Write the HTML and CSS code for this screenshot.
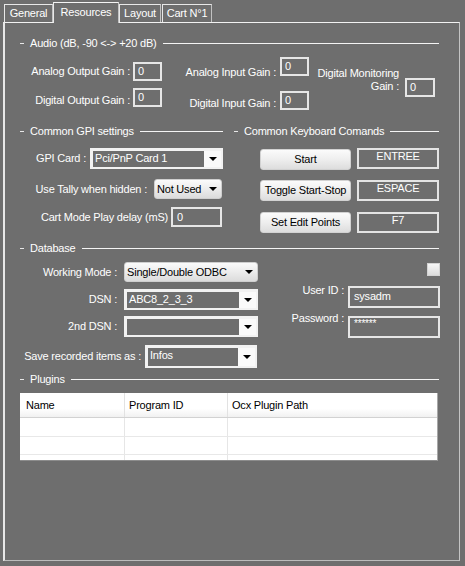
FILE: index.html
```html
<!DOCTYPE html>
<html>
<head>
<meta charset="utf-8">
<title>Resources</title>
<link rel="stylesheet" href="styles.css">
</head>
<body>
<div class="tabs">
  <div class="tab t-general">General</div>
  <div class="tab t-res">Resources</div>
  <div class="tab t-layout">Layout</div>
  <div class="tab t-cart">Cart N°1</div>
</div>
<div class="panel">
  <div class="gh gh-wide"><span>Audio (dB, -90 &lt;-&gt; +20 dB)</span></div>
  <div class="audio">
    <div class="acol1">
      <div class="arow"><span class="lbl al1 a1r1">Analog Output Gain :</span><span class="ibox ag">0</span></div>
      <div class="arow a1row2"><span class="lbl al1 a1r2">Digital Output Gain :</span><span class="ibox ag">0</span></div>
    </div>
    <div class="acol2">
      <div class="arow"><span class="lbl al2 a2r1">Analog Input Gain :</span><span class="ibox ag">0</span></div>
      <div class="arow a2row2"><span class="lbl al2 a2r2">Digital Input Gain :</span><span class="ibox ag">0</span></div>
    </div>
    <div class="acol3">
      <span class="lbl al3">Digital Monitoring<br>Gain :</span><span class="ibox ag3">0</span>
    </div>
  </div>
  <div class="mid">
    <div class="gcol">
      <div class="gh gh-gpi"><span>Common GPI settings</span></div>
      <div class="frow r-gpi"><span class="lbl">GPI Card :</span><div class="combo w-gpi"><span class="ct">Pci/PnP Card 1</span><span class="cb"><i class="arr"></i></span></div></div>
      <div class="frow r-tally"><span class="lbl">Use Tally when hidden :</span><div class="dd w-tally"><span>Not Used</span><i class="arr"></i></div></div>
      <div class="frow r-cart"><span class="lbl">Cart Mode Play delay (mS)</span><span class="ibox w-cart">0</span></div>
    </div>
    <div class="kcol">
      <div class="gh gh-kb"><span>Common Keyboard Comands</span></div>
      <div class="krow k1"><span class="btn">Start</span><span class="kbox">ENTREE</span></div>
      <div class="krow k2"><span class="btn">Toggle Start-Stop</span><span class="kbox">ESPACE</span></div>
      <div class="krow k3"><span class="btn">Set Edit Points</span><span class="kbox">F7</span></div>
    </div>
  </div>
  <div class="gh gh-wide"><span>Database</span></div>
  <div class="db">
    <div class="dleft">
      <div class="frow d-wm"><span class="lbl">Working Mode :</span><div class="dd w-db"><span>Single/Double ODBC</span><i class="arr"></i></div></div>
      <div class="frow d-dsn"><span class="lbl">DSN :</span><div class="combo w-db"><span class="ct">ABC8_2_3_3</span><span class="cb"><i class="arr"></i></span></div></div>
      <div class="frow d-dsn2"><span class="lbl">2nd DSN :</span><div class="combo w-db"><span class="ct"></span><span class="cb"><i class="arr"></i></span></div></div>
    </div>
    <div class="dright">
      <div class="chk"></div>
      <div class="frow d-user"><span class="lbl">User ID :</span><span class="ibox w-user">sysadm</span></div>
      <div class="frow d-pass"><span class="lbl">Password :</span><span class="ibox w-user pw">******</span></div>
    </div>
  </div>
  <div class="srow"><span class="lbl l-save">Save recorded items as :</span><div class="combo w-save"><span class="ct">Infos</span><span class="cb"><i class="arr"></i></span></div></div>
  <div class="gh gh-wide gh-plug"><span>Plugins</span></div>
  <div class="tbl">
    <div class="trow thead"><span class="c1">Name</span><span class="c2">Program ID</span><span class="c3">Ocx Plugin Path</span></div>
    <div class="trow tr1"><span class="c1"></span><span class="c2"></span><span class="c3"></span></div>
    <div class="trow tr2"><span class="c1"></span><span class="c2"></span><span class="c3"></span></div>
    <div class="trow tr3"><span class="c1"></span><span class="c2"></span><span class="c3"></span></div>
  </div>
</div>
</body>
</html>
```

FILE: styles.css
```css
html, body {
  margin: 0;
  padding: 0;
}
body {
  width: 465px;
  height: 566px;
  overflow: hidden;
  background: #6e6e6e;
  color: #fff;
  font-family: "Liberation Sans", Arial, sans-serif;
  font-size: 11px;
  letter-spacing: -0.2px;
}

/* Tabs */
.tabs {
  display: flex;
  align-items: flex-end;
  height: 22px;
  padding-left: 4px;
}
.tab {
  box-sizing: border-box;
  height: 18px;
  border: 1px solid #e8e8e8;
  border-right-color: #c2c2c2;
  border-bottom: none;
  text-align: center;
  line-height: 17px;
  white-space: nowrap;
}
.t-general { width: 49px; }
.t-res {
  width: 66px;
  height: 21px;
  margin-bottom: -1px;
  line-height: 19px;
  position: relative;
  z-index: 1;
  background: #6e6e6e;
  border-top-color: #f4f4f4;
}
.t-layout { width: 42px; }
.t-cart { width: 50px; margin-left: 1px; }

/* Panel */
.panel {
  box-sizing: border-box;
  margin-left: 3px;
  width: 457px;
  height: 539px;
  border-top: 1px solid #f2f2f2;
  border-left: 2px solid #e8e8e8;
  border-right: 1px solid #c4c4c4;
  border-bottom: 1px solid #bcbcbc;
  padding: 14px 0 0 15px;
}

/* Group headers */
.gh {
  display: flex;
  align-items: center;
  height: 13px;
  line-height: 13px;
  white-space: nowrap;
}
.gh::before {
  content: "";
  width: 4px;
  height: 1px;
  background: #e8e8e8;
  margin-right: 6px;
}
.gh::after {
  content: "";
  flex: 1;
  height: 1px;
  background: #f4f4f4;
  margin-left: 6px;
}
.gh-wide { width: 419px; }
.gh-gpi { width: 203px; }
.gh-kb { width: 205px; }

.lbl {
  line-height: 13px;
  white-space: nowrap;
}

/* Text boxes */
.ibox {
  box-sizing: border-box;
  border: 2px solid #e6e6e6;
  color: #fff;
  padding-left: 3px;
  white-space: nowrap;
}

/* Audio */
.audio {
  display: flex;
  align-items: flex-start;
  height: 75px;
}
.arow {
  display: flex;
  align-items: flex-start;
}
.acol1 { padding-top: 12px; }
.a1row2 { margin-top: 7px; }
.al1 { width: 110px; margin-right: 3px; text-align: right; }
.a1r1 { margin-top: 3px; }
.a1r2 { margin-top: 6px; }
.ag {
  width: 29px;
  height: 19px;
  line-height: 15px;
}
.acol2 { padding-top: 7px; }
.a2row2 { margin-top: 12px; }
.al2 { width: 114px; margin-right: 4px; text-align: right; }
.a2r1 { margin-top: 9px; }
.a2r2 { margin-top: 6px; }
.acol3 {
  display: flex;
  align-items: flex-start;
}
.al3 {
  width: 90px;
  text-align: right;
  margin-top: 17px;
}
.ag3 {
  width: 30px;
  height: 19px;
  line-height: 15px;
  margin-left: 6px;
  margin-top: 28px;
}

/* Generic form rows */
.frow {
  display: flex;
  justify-content: flex-end;
  align-items: center;
}

/* Combo (editable) */
.combo {
  box-sizing: border-box;
  display: flex;
  background: #f2f2f2;
  padding: 3px 2px 2px 3px;
}
.combo .ct {
  flex: 1;
  background: #6e6e6e;
  color: #fff;
  padding-left: 2px;
  line-height: 14px;
  white-space: nowrap;
  overflow: hidden;
}
.combo .cb {
  width: 17px;
  display: flex;
  align-items: center;
  justify-content: center;
  background: #fafafa;
}
.arr {
  display: block;
  width: 0;
  height: 0;
  border-left: 4px solid transparent;
  border-right: 4px solid transparent;
  border-top: 4px solid #000;
}

/* Dropdown list (button look) */
.dd {
  box-sizing: border-box;
  display: flex;
  align-items: center;
  background: linear-gradient(#fbfbfb, #ececec 50%, #dcdcdc);
  border: 1px solid #cfcfcf;
  border-radius: 3px;
  color: #000;
  padding-left: 2px;
  white-space: nowrap;
}
.dd .arr {
  margin-left: auto;
  margin-right: 4px;
}

/* GPI column */
.mid {
  display: flex;
  height: 117px;
}
.gcol { width: 203px; }
.r-gpi { margin-top: 10px; height: 21px; }
.r-gpi .lbl { margin-right: 4px; }
.w-gpi { width: 133px; height: 21px; }
.r-tally { margin-top: 10px; height: 20px; }
.r-tally .lbl { margin-right: 7px; }
.w-tally { width: 68px; height: 20px; margin-right: 1px; }
.r-cart { margin-top: 8px; height: 20px; }
.r-cart .lbl { margin-right: 3px; }
.w-cart {
  width: 51px;
  height: 20px;
  line-height: 16px;
  margin-right: 1px;
  padding-left: 4px;
}

/* Keyboard column */
.kcol {
  width: 205px;
  margin-left: 11px;
}
.krow {
  display: flex;
  align-items: flex-start;
  padding-left: 26px;
  gap: 6px;
}
.k1 { margin-top: 10px; }
.k1 .btn { margin-top: 1px; }
.k2 { margin-top: 10px; }
.k3 { margin-top: 11px; }
.btn {
  box-sizing: border-box;
  width: 92px;
  height: 21px;
  line-height: 19px;
  text-align: center;
  color: #000;
  background: linear-gradient(#fbfbfb, #eeeeee 50%, #dddddd);
  border: 1px solid #d2d2d2;
  border-radius: 3px;
  white-space: nowrap;
}
.kbox {
  box-sizing: border-box;
  width: 83px;
  height: 21px;
  border: 2px solid #e4e4e4;
  text-align: center;
  line-height: 12px;
  white-space: nowrap;
}

/* Database */
.db {
  display: flex;
  align-items: flex-start;
}
.dleft { width: 238px; }
.frow .lbl { }
.d-wm { margin-top: 7px; height: 20px; }
.d-dsn { margin-top: 7px; height: 21px; }
.d-dsn2 { margin-top: 6px; height: 21px; }
.dleft .lbl { margin-right: 7px; }
.w-db { width: 134px; height: 100%; }
.d-dsn .combo, .d-dsn2 .combo { height: 21px; }
.d-wm .dd { height: 20px; }
.dright {
  width: 182px;
  display: flex;
  flex-direction: column;
}
.chk {
  box-sizing: border-box;
  width: 13px;
  height: 13px;
  margin-left: auto;
  margin-top: 8px;
  background: linear-gradient(#f7f7f7, #dcdcdc);
  border: 1px solid #d4d4d4;
}
.d-user, .d-pass { align-items: flex-start; }
.d-user { margin-top: 10px; }
.d-pass { margin-top: 8px; }
.d-user .lbl { margin-top: -2px; margin-right: 4px; }
.d-pass .lbl { margin-top: -4px; margin-right: 4px; }
.w-user {
  width: 92px;
  height: 22px;
  line-height: 17px;
  padding-left: 4px;
}
.pw {
  line-height: 12px;
  font-size: 10px;
}

.srow {
  display: flex;
  align-items: center;
  margin-top: 7px;
  height: 23px;
}
.l-save {
  width: 121px;
  text-align: right;
  margin-right: 4px;
}
.w-save { width: 112px; height: 23px; }
.w-save .ct { line-height: 15px; }

/* Plugins */
.gh-plug { margin-top: 5px; }
.tbl {
  box-sizing: border-box;
  margin-top: 7px;
  width: 418px;
  height: 68px;
  overflow: hidden;
  background: #fff;
  border-right: 1px solid #a8a8a8;
  border-bottom: 1px solid #8c8c8c;
  color: #000;
}
.trow {
  box-sizing: border-box;
  display: grid;
  grid-template-columns: 105px 103px 1fr;
  border-bottom: 1px solid #e8e8e8;
}
.trow span {
  box-sizing: border-box;
  border-right: 1px solid #e6e6e6;
  padding-left: 4px;
  white-space: nowrap;
}
.trow .c1 { padding-left: 6px; }
.trow .c3 { border-right: none; }
.thead {
  height: 25px;
  line-height: 24px;
  background: linear-gradient(#ffffff, #ffffff 65%, #f1f1f1);
  border-bottom: 1px solid #d2d2d2;
}
.thead span { border-right-color: #e2e2e2; }
.tr1 { height: 19px; }
.tr2 { height: 18px; }
.tr3 { height: 18px; }
```
